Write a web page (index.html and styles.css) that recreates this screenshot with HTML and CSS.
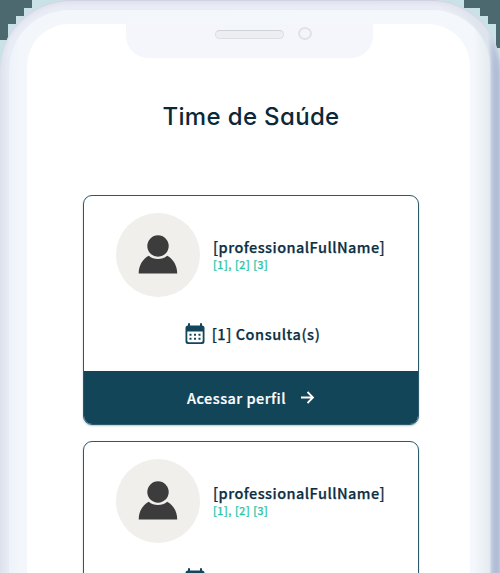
FILE: index.html
```
<!DOCTYPE html>
<html lang="pt-BR">
<head>
<meta charset="utf-8">
<title>Time de Saúde</title>
<link rel="stylesheet" href="styles.css">
</head>
<body>
<svg class="backdrop" viewBox="0 0 500 70" shape-rendering="crispEdges" aria-hidden="true">
  <path fill="#c8e2e8" d="M0 0h500v70H0z"/>
  <path fill="#4c6970" d="M0 0h32v8h-8v8h-8v8H8v16H0zM464 0h36v48h-4V24h-8v-8h-8V8h-16z"/>
</svg>
<svg class="symbols" aria-hidden="true">
  <symbol id="person" viewBox="0 0 40 39">
    <circle cx="20" cy="11" r="10.7"/>
    <path d="M.7 38.500c0-8 4-14.700 10-17.800 5 4.400 13.500 4.400 18.500 0 6 3.100 10 9.800 10 17.800z"/>
  </symbol>
  <symbol id="calendar" viewBox="0 0 20 22">
    <path fill-rule="evenodd" d="M3 1q0-1 1-1t1 1v1.500h10V1q0-1 1-1t1 1v1.500q2.500 0 2.500 2.500v13.500q0 2.500-2.500 2.500H3Q.5 21 .5 18.500V5Q.5 2.500 3 2.500zM2.300 8.500v9q0 1.700 1.700 1.700h12q1.700 0 1.700-1.700v-9z"/>
    <path d="M4.500 10.700h2v2h-2zm4.500 0h2v2H9zm4.500 0h2v2h-2zm-9 4h2v2h-2zm4.500 0h2v2H9zm4.500 0h2v2h-2z"/>
  </symbol>
</svg>
<div class="phone">
  <div class="inner">
    <div class="notch"><span class="speaker"></span><span class="camera"></span></div>
    <main class="screen">
      <h1>Time de Saúde</h1>
      <article class="card">
        <div class="profile">
          <div class="avatar"><svg><use href="#person"/></svg></div>
          <div><h2>[professionalFullName]</h2><p class="tags">[1], [2] [3]</p></div>
        </div>
        <div class="visits"><svg><use href="#calendar"/></svg><span>[1] Consulta(s)</span></div>
        <div class="action"><span>Acessar perfil</span><svg viewBox="0 0 13 13"><path d="M0 6.500h12M6.500 1l5.500 5.500L6.500 12"/></svg></div>
      </article>
      <article class="card">
        <div class="profile">
          <div class="avatar"><svg><use href="#person"/></svg></div>
          <div><h2>[professionalFullName]</h2><p class="tags">[1], [2] [3]</p></div>
        </div>
        <div class="visits"><svg><use href="#calendar"/></svg></div>
      </article>
    </main>
  </div>
</div>
</body>
</html>
```
FILE: styles.css
```
* { box-sizing: border-box; }
html, body { margin: 0; height: 573px; overflow: hidden; }
body {
  position: relative;
  background: #dfe5ee;
  font-family: "Noto Sans CJK JP", "Noto Sans", sans-serif;
  color: #0c2f42;
}
h1, h2, p { margin: 0; }
.backdrop { position: absolute; top: 0; left: 0; width: 500px; height: 70px; }
.symbols { position: absolute; width: 0; height: 0; }
.phone {
  position: relative;
  height: 573px;
  overflow: hidden;
  padding: 9px 10px 0 9px;
  border-radius: 70px 68px 0 0;
  background: linear-gradient(90deg, #dde3ec, #e9edf6 10px, #eaedf6 440px, #dce4ec 488px, #b8c5da 493px, #a3afd0);
  box-shadow: inset 0 1px 1px #cdd0e1, inset 0 4px 5px #dfe2ec;
}
.inner {
  position: relative;
  height: 564px;
  padding: 15px 20px 0 18px;
  border-radius: 60px 58px 0 0;
  background: linear-gradient(90deg, #eef2fa, #f3f6fb 10px, #f4f7fb 465px, #e4ebf0);
  box-shadow: 0 0 2px #e6eaf2, inset 0 1px 0 #e8ebf3;
}
.notch {
  position: absolute;
  top: 14px;
  left: 117px;
  width: 247px;
  height: 35px;
  border-radius: 0 0 22px 22px;
  background: #f4f6fb;
}
.speaker {
  position: absolute;
  left: 89px;
  top: 7px;
  width: 69px;
  height: 9px;
  border: 1px solid #dcdfe5;
  border-top-color: #cfd2d9;
  border-radius: 5px;
  background: #eceef2;
}
.camera {
  position: absolute;
  left: 172px;
  top: 4px;
  width: 14px;
  height: 13px;
  border: 2px solid #dfe2e8;
  border-radius: 50%;
  background: #f3f5f9;
}
.screen {
  height: 549px;
  padding: 76px 51px 0 56px;
  border-radius: 42px 42px 0 0;
  background: #fff;
}
h1 {
  height: 95px;
  font: 450 24px/34px Inter, sans-serif;
  font-feature-settings: "cv11";
  letter-spacing: .35px;
  text-align: center;
  color: #0b2838;
  white-space: nowrap;
}
.card {
  height: 229.500px;
  margin-bottom: 16px;
  border: 1px solid #2d596d;
  border-radius: 9px;
  overflow: hidden;
  box-shadow: 0 1px 2px #b9c8d0;
}
.profile { display: flex; align-items: center; gap: 13px; padding: 17px 0 0 32px; }
.avatar {
  flex: none;
  width: 84px;
  height: 84px;
  padding: 22px;
  border-radius: 50%;
  background: #f0efeb;
}
.avatar svg { display: block; width: 40px; height: 39px; fill: #3c3c3c; }
h2 {
  margin-top: -1px;
  font-size: 14.500px;
  font-weight: 500;
  line-height: 20px;
  letter-spacing: .45px;
  white-space: nowrap;
  -webkit-text-stroke: .25px;
}
.tags {
  font-size: 10.500px;
  line-height: 15px;
  font-weight: 500;
  letter-spacing: .6px;
  color: #2bc6a7;
  -webkit-text-stroke: .25px;
}
.visits {
  display: flex;
  align-items: center;
  justify-content: center;
  gap: 7px;
  height: 74px;
  padding-left: 3px;
  font-size: 14.500px;
  font-weight: 500;
  letter-spacing: .55px;
  -webkit-text-stroke: .25px;
}
.visits span { margin-top: -2px; }
.visits svg { width: 20px; height: 22px; fill: #12475b; stroke: none; }
.card:last-child .visits { padding: 0 113px 2px 0; }
.action {
  display: flex;
  align-items: center;
  justify-content: center;
  gap: 15px;
  height: 53px;
  padding: 0 1px 1px 0;
  background: #134559;
  color: #fff;
  font-size: 14.500px;
  font-weight: 500;
  letter-spacing: .45px;
  -webkit-text-stroke: .2px;
}
.action svg { width: 13px; height: 13px; overflow: visible; fill: none; stroke: #fff; stroke-width: 1.8; }
```
